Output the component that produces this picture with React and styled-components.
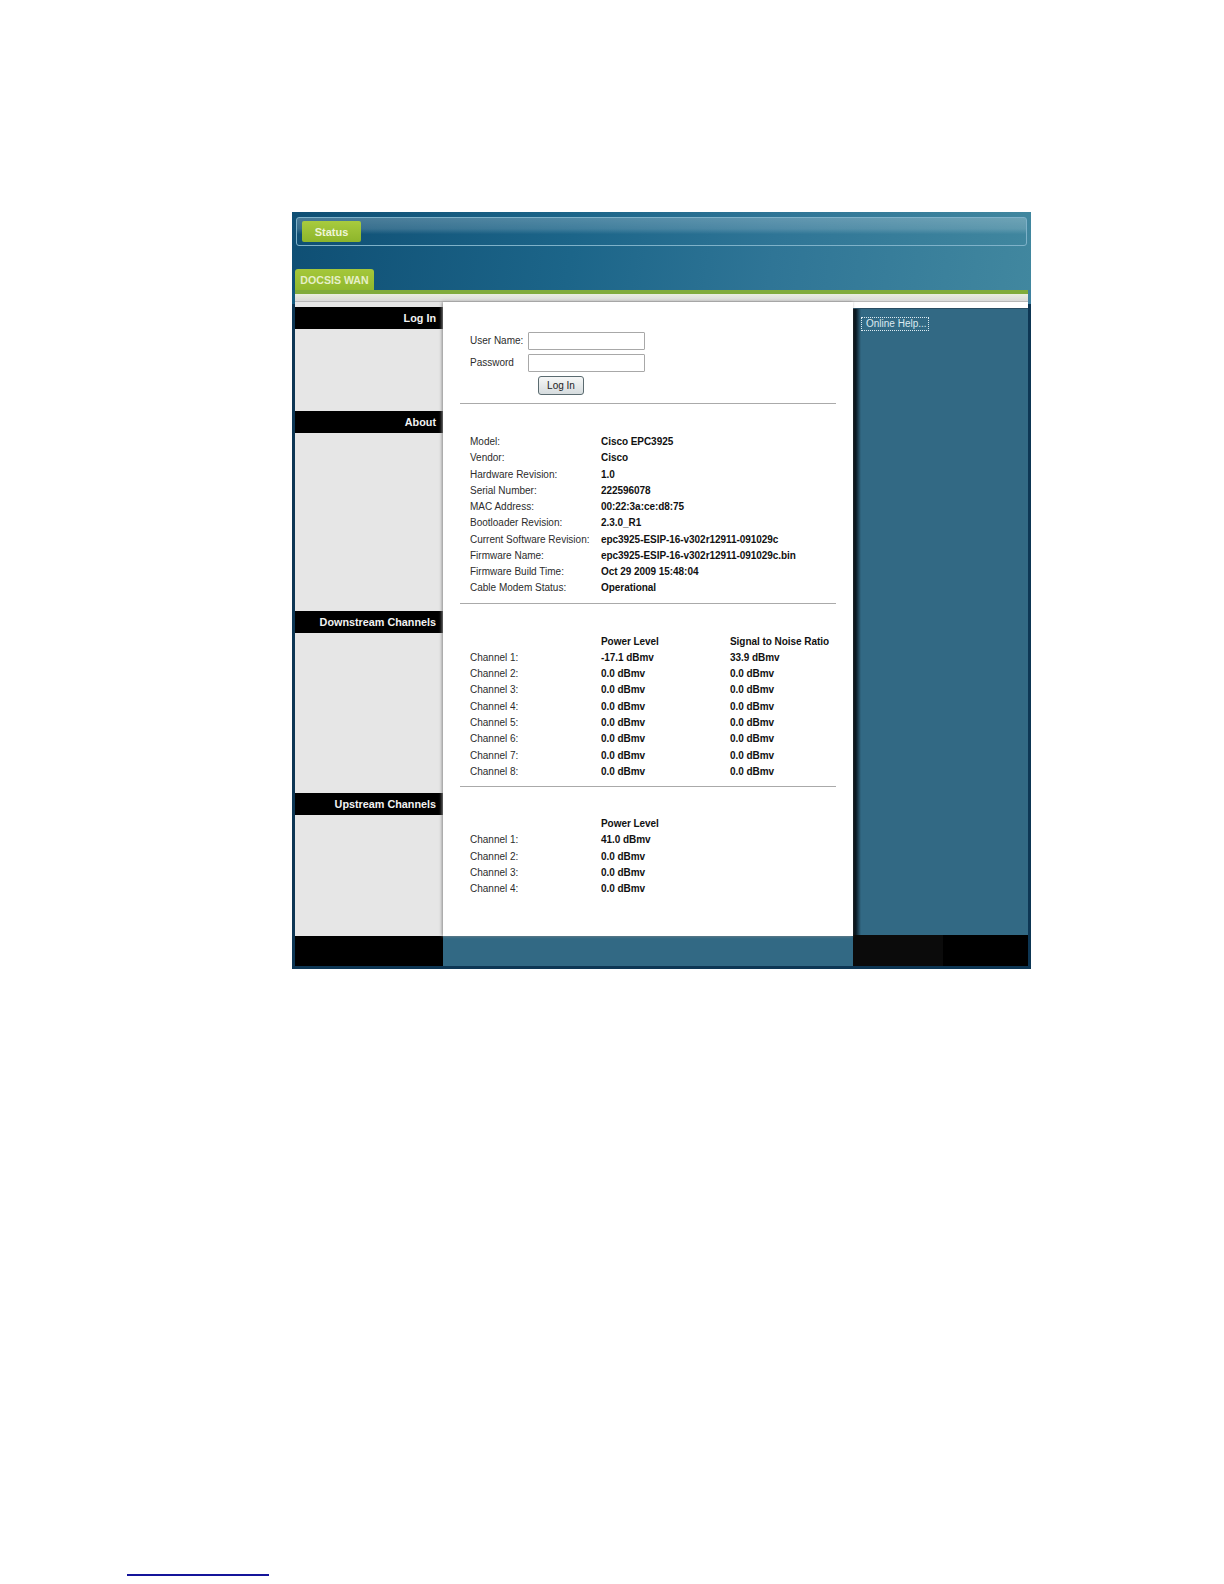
import React from 'react';
import styled, { createGlobalStyle } from 'styled-components';

const GlobalStyle = createGlobalStyle`
  html, body {
    margin: 0;
    padding: 0;
    background: #fff;
  }
  body {
    font-family: "Liberation Sans", Arial, sans-serif;
    font-size: 10px;
    color: #2c2c2c;
  }
`;

const Page = styled.div`
  height: 1584px;
  padding-top: 212px;
  box-sizing: border-box;
  overflow: hidden;
`;

const Frame = styled.div`
  width: 739px;
  height: 757px;
  margin-left: 292px;
  padding: 3px;
  box-sizing: border-box;
  display: flex;
  flex-direction: column;
  background: linear-gradient(90deg, #135b80, #3f81a0) 0 0 / 100% 92px no-repeat, #0d3654;
`;

const Header = styled.header`
  height: 75px;
  margin: -3px -3px 0;
  padding: 5px 4px 0;
  position: relative;
  background: linear-gradient(98deg, #0f4f74 0%, #1c6589 38%, #2f7596 65%, #41879f 100%);
`;

const Nav = styled.nav`
  height: 29px;
  box-sizing: border-box;
  padding: 3px 0 0 5px;
  border: 1px solid #7fb2c9;
  border-radius: 3px;
  background: linear-gradient(180deg, rgba(255, 255, 255, 0.24) 0%, rgba(255, 255, 255, 0.16) 40%, rgba(255, 255, 255, 0) 60%);
`;

const NavButton = styled.a`
  display: flex;
  align-items: center;
  justify-content: center;
  width: 59px;
  height: 21px;
  border-radius: 2px;
  background: linear-gradient(180deg, #a8cb3e, #8db52b);
  color: #eef5d8;
  font-size: 11px;
  font-weight: bold;
`;

const TabRow = styled.div`
  position: absolute;
  left: 3px;
  bottom: 0;
`;

const Tab = styled.a`
  display: flex;
  align-items: center;
  justify-content: center;
  width: 79px;
  height: 21px;
  border-radius: 3px 3px 0 0;
  background: linear-gradient(180deg, #a5c73a, #90b82e);
  color: #e6efc8;
  font-size: 10.6px;
  font-weight: bold;
`;

const GreenLine = styled.div`
  height: 4px;
  flex-shrink: 0;
  background: #80ac3c;
`;

const Strip = styled.div`
  height: 8px;
  flex-shrink: 0;
  background: linear-gradient(180deg, #e9eee0, #d9d9d9);
  border-bottom: 1px solid #b8b8b8;
  box-sizing: border-box;
`;

const Body = styled.div`
  display: grid;
  grid-template-columns: 148px 410px 175px;
  height: 634px;
  flex-shrink: 0;
  background: #fff;
`;

const Sidebar = styled.aside`
  padding-top: 5px;
  background: #e6e6e6;
`;

const SideSection = styled.div`
  height: ${(p) => p.$height}px;
`;

const SideTitle = styled.h3`
  margin: 0;
  height: 22px;
  padding-right: 7px;
  background: #000;
  color: #f2f2f2;
  font-size: 10.8px;
  line-height: 22px;
  font-weight: bold;
  text-align: right;
`;

const Main = styled.main`
  position: relative;
  padding: 0 17px 0 17px;
  background: #fff;
  box-shadow: -1px 0 3px #8a8a8a;
`;

const LoginForm = styled.form`
  display: grid;
  grid-template-columns: 58px 117px;
  grid-auto-rows: 18px;
  row-gap: 4px;
  padding: 30px 0 0 10px;
  height: 71px;
`;

const FieldLabel = styled.label`
  line-height: 18px;
`;

const TextInput = styled.input`
  width: 117px;
  height: 18px;
  padding: 0;
  box-sizing: border-box;
  background: #fff;
  border: 1px solid #a8a8a8;
  border-radius: 1px;
`;

const LoginButton = styled.button`
  grid-column: 2;
  margin-left: 10px;
  width: 46px;
  height: 19px;
  padding: 0;
  border: 1px solid #5b6b70;
  border-radius: 3px;
  background: linear-gradient(180deg, #f6f7f7, #d6dcde);
  color: #222;
  font-family: inherit;
  font-size: 10px;
`;

const Divider = styled.hr`
  margin: 0;
  border: 0;
  border-top: 1px solid #aaa;
`;

const InfoTable = styled.div`
  display: grid;
  grid-template-columns: 131px 129px 1fr;
  grid-auto-rows: 16.28px;
  padding: ${(p) => p.$top}px 0 ${(p) => p.$bottom}px 10px;
  line-height: 16.28px;
  white-space: nowrap;
`;

const RowLabel = styled.div`
  grid-column: 1;
`;

const Value = styled.div`
  font-weight: bold;
  color: #111;
  letter-spacing: -0.05px;
`;

const HelpPanel = styled.aside`
  margin-top: 6px;
  padding: 8px 0 0 8px;
  background: linear-gradient(90deg, #050a0d 0, #0c1c26 3px, #326984 8px, #326984 100%);
  border-top: 1px solid #2a4d63;
`;

const HelpLink = styled.a`
  display: block;
  width: 68px;
  height: 14px;
  padding-left: 4px;
  box-sizing: border-box;
  border: 1px dotted #dcebf2;
  color: #dcebf2;
  font-size: 10px;
  line-height: 12px;
`;

const Footer = styled.footer`
  display: grid;
  grid-template-columns: 148px 410px 175px;
  height: 30px;
  flex-shrink: 0;
`;

const FooterBlack = styled.div`
  background: #000;
`;

const FooterTeal = styled.div`
  background: #326984;
`;

const FooterDark = styled.div`
  margin-top: -1px;
  background: linear-gradient(90deg, #0b0b0b 90px, #000 90px);
`;

const FootLine = styled.div`
  width: 142px;
  height: 2px;
  margin: 605px 0 0 127px;
  background: #14149a;
`;

const about = [
  ['Model:', 'Cisco EPC3925'],
  ['Vendor:', 'Cisco'],
  ['Hardware Revision:', '1.0'],
  ['Serial Number:', '222596078'],
  ['MAC Address:', '00:22:3a:ce:d8:75'],
  ['Bootloader Revision:', '2.3.0_R1'],
  ['Current Software Revision:', 'epc3925-ESIP-16-v302r12911-091029c'],
  ['Firmware Name:', 'epc3925-ESIP-16-v302r12911-091029c.bin'],
  ['Firmware Build Time:', 'Oct 29 2009 15:48:04'],
  ['Cable Modem Status:', 'Operational'],
];

const downstream = [
  ['Channel 1:', '-17.1 dBmv', '33.9 dBmv'],
  ['Channel 2:', '0.0 dBmv', '0.0 dBmv'],
  ['Channel 3:', '0.0 dBmv', '0.0 dBmv'],
  ['Channel 4:', '0.0 dBmv', '0.0 dBmv'],
  ['Channel 5:', '0.0 dBmv', '0.0 dBmv'],
  ['Channel 6:', '0.0 dBmv', '0.0 dBmv'],
  ['Channel 7:', '0.0 dBmv', '0.0 dBmv'],
  ['Channel 8:', '0.0 dBmv', '0.0 dBmv'],
];

const upstream = [
  ['Channel 1:', '41.0 dBmv'],
  ['Channel 2:', '0.0 dBmv'],
  ['Channel 3:', '0.0 dBmv'],
  ['Channel 4:', '0.0 dBmv'],
];

function Rows({ rows }) {
  return rows.map((row) => (
    <React.Fragment key={row[0]}>
      <RowLabel>{row[0]}</RowLabel>
      {row.slice(1).map((cell, i) => (
        <Value key={i}>{cell}</Value>
      ))}
    </React.Fragment>
  ));
}

export default function App() {
  return (
    <Page>
      <GlobalStyle />
      <Frame>
        <Header>
          <Nav>
            <NavButton>Status</NavButton>
          </Nav>
          <TabRow>
            <Tab>DOCSIS WAN</Tab>
          </TabRow>
        </Header>
        <GreenLine />
        <Strip />
        <Body>
          <Sidebar>
            <SideSection $height={104}>
              <SideTitle>Log In</SideTitle>
            </SideSection>
            <SideSection $height={200}>
              <SideTitle>About</SideTitle>
            </SideSection>
            <SideSection $height={182}>
              <SideTitle>Downstream Channels</SideTitle>
            </SideSection>
            <SideSection $height={143}>
              <SideTitle>Upstream Channels</SideTitle>
            </SideSection>
          </Sidebar>
          <Main>
            <LoginForm onSubmit={(e) => e.preventDefault()}>
              <FieldLabel>User Name:</FieldLabel>
              <TextInput type="text" />
              <FieldLabel>Password</FieldLabel>
              <TextInput type="password" />
              <LoginButton type="submit">Log In</LoginButton>
            </LoginForm>
            <Divider />
            <InfoTable $top={30} $bottom={6}>
              <Rows rows={about} />
            </InfoTable>
            <Divider />
            <InfoTable $top={30} $bottom={6}>
              <RowLabel />
              <Value>Power Level</Value>
              <Value>Signal to Noise Ratio</Value>
              <Rows rows={downstream} />
            </InfoTable>
            <Divider />
            <InfoTable $top={29} $bottom={0}>
              <RowLabel />
              <Value>Power Level</Value>
              <Rows rows={upstream} />
            </InfoTable>
          </Main>
          <HelpPanel>
            <HelpLink>Online Help...</HelpLink>
          </HelpPanel>
        </Body>
        <Footer>
          <FooterBlack />
          <FooterTeal />
          <FooterDark />
        </Footer>
      </Frame>
      <FootLine />
    </Page>
  );
}
